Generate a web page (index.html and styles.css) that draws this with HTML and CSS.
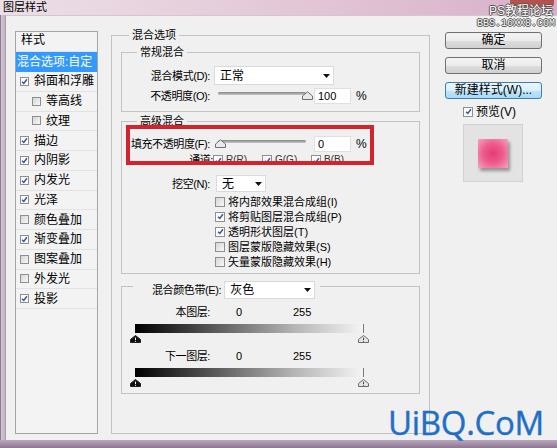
FILE: index.html
```html
<!DOCTYPE html>
<html lang="zh-CN">
<head>
<meta charset="utf-8">
<title>图层样式</title>
<link rel="stylesheet" href="styles.css">
</head>
<body>
<div class="window">
  <div class="titlebar"><span class="title">图层样式</span></div>
  <div class="client">
    <ul class="styles">
      <li class="row head">样式</li>
      <li class="row sel">混合选项:自定</li>
      <li class="row"><span class="cb on"><svg viewBox="0 0 8 8"><path d="M1.2 4.2 L3.2 6.2 L6.8 1.4"/></svg></span>斜面和浮雕</li>
      <li class="row ind"><span class="cb"></span>等高线</li>
      <li class="row ind"><span class="cb"></span>纹理</li>
      <li class="row"><span class="cb on"><svg viewBox="0 0 8 8"><path d="M1.2 4.2 L3.2 6.2 L6.8 1.4"/></svg></span>描边</li>
      <li class="row"><span class="cb on"><svg viewBox="0 0 8 8"><path d="M1.2 4.2 L3.2 6.2 L6.8 1.4"/></svg></span>内阴影</li>
      <li class="row"><span class="cb on"><svg viewBox="0 0 8 8"><path d="M1.2 4.2 L3.2 6.2 L6.8 1.4"/></svg></span>内发光</li>
      <li class="row"><span class="cb on"><svg viewBox="0 0 8 8"><path d="M1.2 4.2 L3.2 6.2 L6.8 1.4"/></svg></span>光泽</li>
      <li class="row"><span class="cb"></span>颜色叠加</li>
      <li class="row"><span class="cb on"><svg viewBox="0 0 8 8"><path d="M1.2 4.2 L3.2 6.2 L6.8 1.4"/></svg></span>渐变叠加</li>
      <li class="row"><span class="cb"></span>图案叠加</li>
      <li class="row"><span class="cb"></span>外发光</li>
      <li class="row"><span class="cb on"><svg viewBox="0 0 8 8"><path d="M1.2 4.2 L3.2 6.2 L6.8 1.4"/></svg></span>投影</li>
    </ul>

    <fieldset class="group main">
      <legend>混合选项</legend>

      <fieldset class="group sub normal">
        <legend>常规混合</legend>
        <div class="frow r-mode">
          <span class="lab">混合模式(D):</span>
          <span class="select mode"><span>正常</span><svg class="arr" viewBox="0 0 7 4"><path d="M0 0H7L3.5 4Z"/></svg></span>
        </div>
        <div class="frow r-opac">
          <span class="lab">不透明度(O):</span>
          <span class="slider"><span class="track"></span><svg class="knob max" viewBox="0 0 11 9"><path d="M0.5 8.5V5L5.5 0.8L10.5 5V8.5Z"/></svg></span>
          <span class="num">100</span><span class="pct">%</span>
        </div>
      </fieldset>

      <fieldset class="group sub adv">
        <legend>高级混合</legend>
        <div class="frow r-fill">
          <span class="lab">填充不透明度(F):</span>
          <span class="slider"><span class="track"></span><svg class="knob min" viewBox="0 0 11 9"><path d="M0.5 8.5V5L5.5 0.8L10.5 5V8.5Z"/></svg></span>
          <span class="num">0</span><span class="pct">%</span>
        </div>
        <div class="frow r-chan">
          <span class="lab">通道:</span>
          <span class="chan"><span class="cb c10 on"><svg viewBox="0 0 8 8"><path d="M1.2 4.2 L3.2 6.2 L6.8 1.4"/></svg></span>R(R)</span>
          <span class="chan"><span class="cb c10 on"><svg viewBox="0 0 8 8"><path d="M1.2 4.2 L3.2 6.2 L6.8 1.4"/></svg></span>G(G)</span>
          <span class="chan"><span class="cb c10 on"><svg viewBox="0 0 8 8"><path d="M1.2 4.2 L3.2 6.2 L6.8 1.4"/></svg></span>B(B)</span>
        </div>
        <div class="frow r-knock">
          <span class="lab">挖空(N):</span>
          <span class="select knock"><span>无</span><svg class="arr" viewBox="0 0 7 4"><path d="M0 0H7L3.5 4Z"/></svg></span>
        </div>
        <div class="checks">
          <div class="chk"><span class="cb c10"></span>将内部效果混合成组(I)</div>
          <div class="chk"><span class="cb c10 on"><svg viewBox="0 0 8 8"><path d="M1.2 4.2 L3.2 6.2 L6.8 1.4"/></svg></span>将剪贴图层混合成组(P)</div>
          <div class="chk"><span class="cb c10 on"><svg viewBox="0 0 8 8"><path d="M1.2 4.2 L3.2 6.2 L6.8 1.4"/></svg></span>透明形状图层(T)</div>
          <div class="chk"><span class="cb c10"></span>图层蒙版隐藏效果(S)</div>
          <div class="chk"><span class="cb c10"></span>矢量蒙版隐藏效果(H)</div>
        </div>
      </fieldset>

      <fieldset class="group sub band">
        <legend><span class="band-leg"><span class="blab">混合颜色带(E):</span><span class="select bsel"><span>灰色</span><svg class="arr" viewBox="0 0 7 4"><path d="M0 0H7L3.5 4Z"/></svg></span></span></legend>
        <div class="frow brow first"><span class="lab">本图层:</span><span class="v0">0</span><span class="v255">255</span></div>
        <div class="gbar"></div>
        <div class="handles">
          <svg class="h dark" viewBox="0 0 11 8"><path d="M0.5 7.5V4.5L5.5 0.5L10.5 4.5V7.5Z"/><path class="mark" d="M5.5 2.6V5.2M5.5 6V6.8"/></svg>
          <svg class="h light" viewBox="0 0 11 8"><path d="M0.5 7.5V4.5L5.5 0.5L10.5 4.5V7.5Z"/><path class="mark" d="M5.5 2.6V5.2M5.5 6V6.8"/></svg>
        </div>
        <div class="frow brow"><span class="lab">下一图层:</span><span class="v0">0</span><span class="v255">255</span></div>
        <div class="gbar"></div>
        <div class="handles">
          <svg class="h dark" viewBox="0 0 11 8"><path d="M0.5 7.5V4.5L5.5 0.5L10.5 4.5V7.5Z"/><path class="mark" d="M5.5 2.6V5.2M5.5 6V6.8"/></svg>
          <svg class="h light" viewBox="0 0 11 8"><path d="M0.5 7.5V4.5L5.5 0.5L10.5 4.5V7.5Z"/><path class="mark" d="M5.5 2.6V5.2M5.5 6V6.8"/></svg>
        </div>
      </fieldset>
    </fieldset>

    <div class="side">
      <div class="btn">确定</div>
      <div class="btn">取消</div>
      <div class="btn def">新建样式(W)...</div>
      <div class="prev-row"><span class="cb c10 on"><svg viewBox="0 0 8 8"><path d="M1.2 4.2 L3.2 6.2 L6.8 1.4"/></svg></span>预览(V)</div>
      <div class="preview"><div class="swatch"></div></div>
    </div>

    <div class="redbox"></div>
    <div class="uibq">UiBQ.CoM</div>
  </div>
  <div class="bottomframe"></div>
  <div class="close"></div>
  <div class="wm"><div class="wm1">PS教程论坛</div><div class="wm2">BBS.16XX8.COM</div></div>
</div>
</body>
</html>
```

FILE: styles.css
```css
* { box-sizing: border-box; margin: 0; padding: 0; }
body {
  background: #b9a6ba;
  font-family: "Liberation Sans", "Noto Sans CJK SC", sans-serif;
  font-size: 11px;
  line-height: 14px;
  color: #000;
}
.window {
  position: relative;
  width: 557px;
  height: 448px;
  display: flex;
  flex-direction: column;
  overflow: hidden;
  background: linear-gradient(to right, #8d7a91 0, #8d7a91 1px, #d2c5d4 1px, #c3b4c6 5px);
}
.titlebar {
  flex: none;
  height: 15px;
  padding-left: 3px;
  background: linear-gradient(to right, #ecdfe6 0%, #e4cbd9 45%, #d8b0c9 100%);
}
.title { font-size: 11px; line-height: 14px; }
.client {
  flex: none;
  position: relative;
  height: 425px;
  margin-left: 5px;
  border-left: 1px solid #a2a2a2;
  border-top: 1px solid #d4c6d0;
  background: #f0f0f0;
  display: flex;
  align-items: flex-start;
  padding: 12px 0 0 9px;
}
.bottomframe { flex: 1; background: linear-gradient(#b9a8bd, #8c7791); }

/* style list */
.styles {
  list-style: none;
  flex: none;
  width: 83px;
  height: 403px;
  margin-top: 3px;
  border: 1px solid #a5a5a5;
  background: #f3f3f3;
  font-size: 12px;
}
.styles .row {
  display: flex;
  align-items: center;
  gap: 5px;
  height: 19.75px;
  padding-left: 4px;
  border-bottom: 1px solid #e2e2e2;
}
.styles .head { height: 20px; padding-left: 5px; align-items: flex-start; padding-top: 1px; }
.styles .sel { height: 20px; padding-left: 1px; background: #3399ff; color: #fff; border-bottom-color: #3399ff; }
.styles .ind { padding-left: 16px; }

.cb {
  flex: none;
  display: inline-flex;
  align-items: center;
  justify-content: center;
  width: 9px;
  height: 9px;
  border: 1px solid #8e8f8f;
  background: linear-gradient(135deg, #d6d6d6, #f8f8f8);
}
.cb.on { background: #fcfcfc; }
.cb.c10 { width: 10px; height: 10px; }
.cb svg { display: block; width: 7px; height: 7px; }
.cb svg path { fill: none; stroke: #2f52a6; stroke-width: 1.6; }

/* group boxes */
.group { border: 1px solid #c3c3c3; min-width: 0; }
.group > legend { padding: 0 3px; line-height: 14px; font-size: 11px; }
.main { flex: none; width: 319px; height: 406px; margin-left: 13px; padding: 0 9px; }
.main > legend { margin-left: 8px; }
.sub { width: 299px; }
.sub > legend { margin-left: 15px; }
.normal { height: 67px; margin-top: 3px; }
.adv { height: 160px; margin-top: 2px; }
.band { height: 120px; margin-top: 0; }

.frow { display: flex; align-items: center; }
.lab { flex: none; width: 88px; text-align: right; white-space: nowrap; letter-spacing: -0.4px; }

.select {
  flex: none;
  display: flex;
  align-items: center;
  justify-content: space-between;
  height: 19px;
  background: #fff;
  border: 1px solid #dadada;
  padding: 0 3px 0 5px;
  font-size: 12px;
}
.arr { width: 7px; height: 4px; display: block; }
.arr path { fill: #111; }
.mode { width: 120px; margin-left: 4px; }
.r-mode { height: 19px; margin-top: 7px; }
.r-opac { height: 16px; margin-top: 3px; }

.slider { position: relative; flex: none; width: 94px; height: 16px; margin-left: 4px; padding: 4px 2px 0 4px; }
.track { display: block; height: 3px; border-radius: 2px; background: linear-gradient(#858585, #c9c9c9); }
.knob { position: absolute; top: 3px; width: 11px; height: 9px; }
.knob path { fill: #e9e9e9; stroke: #6f6f6f; stroke-width: 1; }
.knob.max { left: 88px; }
.knob.min { left: 1px; }
.num {
  flex: none;
  width: 37px;
  height: 16px;
  margin-left: 6px;
  padding-left: 3px;
  background: #fff;
  border: 1px solid #e0e0e0;
  line-height: 14px;
}
.pct { margin-left: 5px; font-size: 12px; }

.r-fill { height: 16px; margin-top: 8px; }
.r-chan { height: 14px; margin-top: 1px; }
.chan { display: flex; align-items: center; gap: 3px; width: 49px; font-size: 10px; color: #333; }
.r-chan .lab { width: 91px; }
.r-knock { height: 17px; margin-top: 8px; }
.knock { width: 50px; height: 17px; margin-left: 6px; }
.checks { margin-top: 2px; }
.chk { display: flex; align-items: center; gap: 3px; height: 15px; padding-left: 93px; }

.band > legend { padding: 7px 5px 0 0; margin-left: 11px; }
.band-leg { display: flex; align-items: center; }
.blab { padding-left: 19px; letter-spacing: -0.4px; }
.bsel { width: 91px; height: 18px; margin-left: 3px; }

.brow { height: 14px; }
.brow.first { margin-top: 6px; }
.v0 { width: 57px; margin-left: 26px; }
.gbar {
  width: 229px;
  height: 9px;
  margin: 5px 0 0 13px;
  background: linear-gradient(to right, #000 0%, #5a5a5a 35%, #b5b5b5 70%, #f4f4f4 100%);
  border-right: 1px solid #7a7a7a;
}
.handles { display: flex; justify-content: space-between; width: 239px; height: 8px; margin: 2px 0 6px 8px; }
.h { width: 11px; height: 8px; display: block; }
.h.dark path { fill: #111; stroke: #222; }
.h.dark .mark { stroke: #fff; fill: none; stroke-width: 1; }
.h.light path { fill: #e4e4e4; stroke: #6a6a6a; }
.h.light .mark { stroke: #444; fill: none; stroke-width: 1; }

/* side column */
.side { flex: none; width: 97px; margin-left: 15px; margin-top: 4px; display: flex; flex-direction: column; }
.btn {
  height: 17px;
  margin-bottom: 8px;
  border: 1px solid #707070;
  border-radius: 3px;
  background: linear-gradient(#f3f3f3 0%, #ececec 50%, #dedede 51%, #d0d0d0 100%);
  text-align: center;
  line-height: 15px;
  font-size: 12px;
}
.btn.def { border-color: #3c7fb1; background: linear-gradient(#eaf6fd 0%, #d9f0fc 50%, #bee6fd 51%, #a7d9f5 100%); }
.prev-row { display: flex; align-items: center; gap: 3px; height: 11px; margin: -1px 0 0 18px; font-size: 12px; }
.preview {
  width: 60px;
  height: 58px;
  margin: 7px 0 0 18px;
  background: #e3e3e3;
  border: 1px solid #d2d2d2;
  display: flex;
  align-items: center;
  justify-content: center;
}
.swatch {
  width: 30px;
  height: 29px;
  background: radial-gradient(circle, #e63b77 0%, #ec5a8a 45%, #f6a3bd 100%);
  box-shadow: 2px 3px 3px rgba(0, 0, 0, 0.35);
}

/* overlays */
.redbox {
  position: absolute;
  left: 120px;
  top: 109px;
  width: 248px;
  height: 40px;
  border: 4px solid #d3242e;
}
.uibq {
  position: absolute;
  left: 382px;
  top: 390px;
  font-family: "Open Sans", "Noto Sans", sans-serif;
  font-size: 33px;
  line-height: 33px;
  color: #1f6fc6;
  letter-spacing: -0.3px;
  -webkit-text-stroke: 0.4px #1f6fc6;
}
.close {
  position: absolute;
  right: 3px;
  top: -4px;
  width: 44px;
  height: 11px;
  border-radius: 0 0 4px 4px;
  background: #b4524f;
}
.wm {
  position: absolute;
  right: 2px;
  top: 5px;
  text-align: right;
  color: #fff;
  text-shadow: 1px 0 #555, -1px 0 #555, 0 1px #555, 0 -1px #555;
}
.wm1 { font-size: 12px; line-height: 13px; padding-right: 2px; }
.wm2 { font-family: "Liberation Mono", monospace; font-size: 10px; line-height: 11px; color: #f4f4f4; }
```
